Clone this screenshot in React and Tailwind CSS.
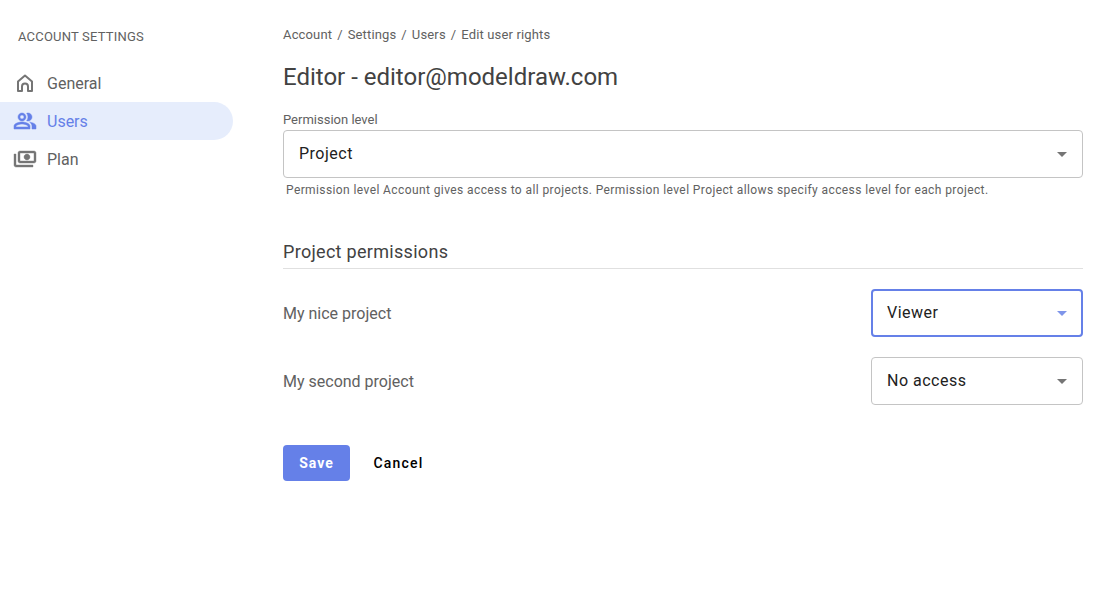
import React from "react";

const HomeIcon = () => (
  <svg viewBox="0 0 24 24" className="w-6 h-6 fill-none stroke-current stroke-2">
    <path strokeLinejoin="round" d="M5 20v-9.5l7-6 7 6V20h-4v-4.5a3 3 0 0 0-6 0V20z" />
  </svg>
);

const UsersIcon = () => (
  <svg viewBox="0 0 24 24" className="w-6 h-6 fill-current stroke-current stroke-[0.5]">
    <path d="M16.67 13.13C18.04 14.06 19 15.32 19 17v3h4v-3c0-2.18-3.57-3.47-6.33-3.87z" />
    <path d="M15 12c2.21 0 4-1.79 4-4s-1.79-4-4-4c-.47 0-.91.1-1.33.24C14.5 5.27 15 6.58 15 8s-.5 2.73-1.33 3.76c.42.14.86.24 1.33.24zm-6 0c2.21 0 4-1.79 4-4s-1.79-4-4-4-4 1.79-4 4 1.79 4 4 4zm0-6c1.1 0 2 .9 2 2s-.9 2-2 2-2-.9-2-2 .9-2 2-2zm0 7c-2.67 0-8 1.34-8 4v3h16v-3c0-2.66-5.33-4-8-4zm6 5H3v-.99C3.2 16.29 6.3 15 9 15s5.8 1.29 6 2v1z" />
  </svg>
);

const PlanIcon = () => (
  <svg viewBox="0 0 24 24" className="w-6 h-6 fill-current stroke-current stroke-[0.4] -scale-x-100">
    <path d="M19 14V6c0-1.1-.9-2-2-2H3c-1.1 0-2 .9-2 2v8c0 1.1.9 2 2 2h14c1.1 0 2-.9 2-2zm-2 0H3V6h14v8zm-7-7c-1.66 0-3 1.34-3 3s1.34 3 3 3 3-1.34 3-3-1.34-3-3-3zm13 0v11c0 1.1-.9 2-2 2H4v-2h17V7h2z" />
  </svg>
);

const Caret = () => (
  <svg viewBox="0 0 24 24" className="w-6 h-6 fill-current">
    <path d="M7 10l5 5 5-5z" />
  </svg>
);

const NavItem = ({ icon, label, active }) => (
  <div
    className={
      active
        ? "h-[38px] flex items-center gap-[10px] pl-[13px] rounded-r-full bg-[#e6edfc] text-[#6580e8]"
        : "h-[38px] flex items-center gap-[10px] pl-[13px] text-[#757575]"
    }
  >
    {icon}
    <span className={active ? "text-base pt-px" : "text-base pt-px text-[#616161]"}>{label}</span>
  </div>
);

const Select = ({ value, focused, className }) => (
  <div
    className={
      "h-12 bg-white rounded flex items-center justify-between " +
      (focused
        ? "border-2 border-[#6580e8] pl-[14px] pr-[7px] text-[#7f95ea] "
        : "border border-[#c4c4c4] pl-[15px] pr-[8px] text-[#757575] ") +
      className
    }
  >
    <span className="text-base text-[#212121] tracking-[0.5px]">{value}</span>
    <Caret />
  </div>
);

const ProjectRow = ({ name, value, focused }) => (
  <div className="flex items-center justify-between">
    <span className="text-base text-[#616161] pt-px">{name}</span>
    <Select value={value} focused={focused} className="w-[212px]" />
  </div>
);

export default function App() {
  return (
    <div className="flex min-h-[603px] bg-white font-['Roboto',sans-serif]">
      <aside className="w-[233px] shrink-0">
        <div className="pl-[18px] pt-[29px] pb-[20px] text-[13px] leading-[15px] tracking-[0.2px] text-[#616161]">
          ACCOUNT SETTINGS
        </div>
        <nav>
          <NavItem icon={<HomeIcon />} label="General" />
          <NavItem icon={<UsersIcon />} label="Users" active />
          <NavItem icon={<PlanIcon />} label="Plan" />
        </nav>
      </aside>

      <main className="w-[800px] ml-[50px] pt-[27px]">
        <div className="flex gap-[5px] text-[13px] leading-[15px] tracking-[0.15px] text-[#616161]">
          <span>Account</span>
          <span>/</span>
          <span>Settings</span>
          <span>/</span>
          <span>Users</span>
          <span>/</span>
          <span>Edit user rights</span>
        </div>
        <h1 className="mt-[20px] text-2xl leading-[30px] text-[#424242]">
          Editor - editor@modeldraw.com
        </h1>
        <div className="mt-[20px] text-[13px] leading-[15px] text-[#616161]">
          Permission level
        </div>
        <Select value="Project" className="mt-[3px]" />
        <p className="mt-[5px] pl-[3px] text-xs leading-[15px] tracking-[0.4px] text-[#616161]">
          Permission level Account gives access to all projects. Permission level Project allows specify access level for each project.
        </p>
        <h2 className="mt-[42px] pb-[4px] text-lg leading-[24px] tracking-[0.3px] text-[#424242] border-b border-[#e0e0e0]">
          Project permissions
        </h2>
        <div className="mt-[20px] flex flex-col gap-5">
          <ProjectRow name="My nice project" value="Viewer" focused />
          <ProjectRow name="My second project" value="No access" />
        </div>
        <div className="mt-10 flex items-center gap-[8px]">
          <button className="h-9 w-[67px] rounded bg-[#6580e8] text-white text-sm font-bold tracking-[1px]">
            Save
          </button>
          <button className="h-9 w-[81px] text-black text-sm font-medium tracking-[1.2px]">
            Cancel
          </button>
        </div>
      </main>
    </div>
  );
}
